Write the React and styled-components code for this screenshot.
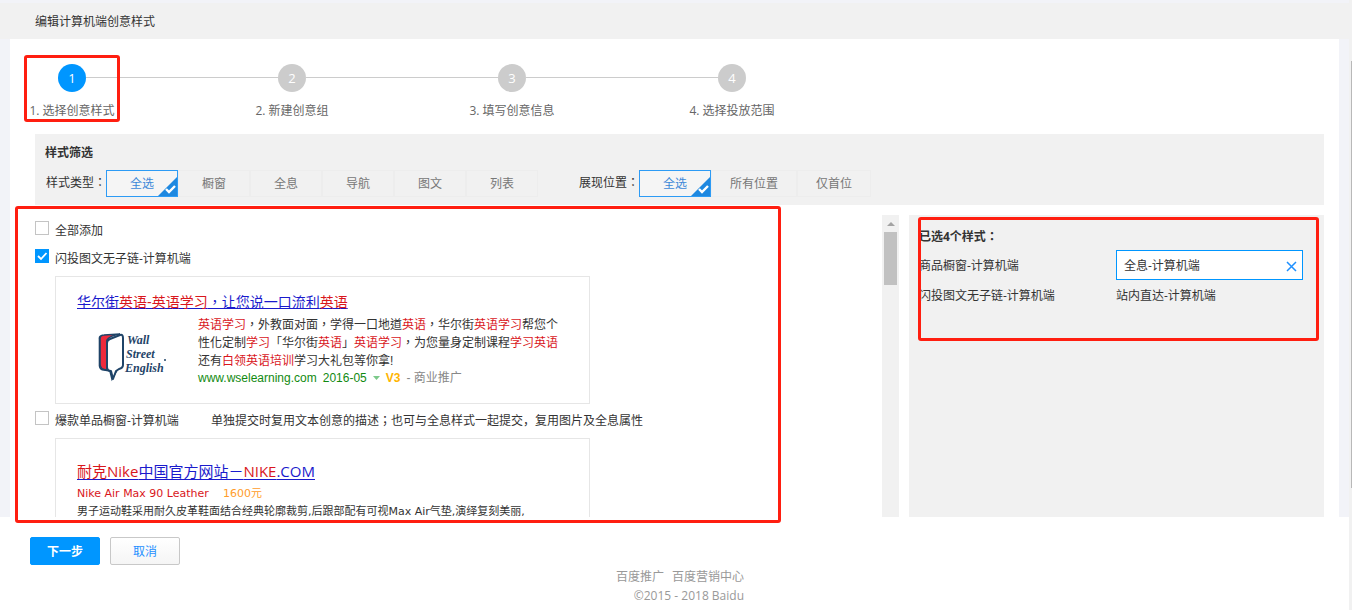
import React, { useState } from "react";
import styled, { createGlobalStyle, css } from "styled-components";

const GlobalStyle = createGlobalStyle`
  * { box-sizing: border-box; }
  body {
    margin: 0;
    background: #fff;
    color: #333;
    font: 12px/20px "Open Sans", "Noto Sans CJK SC", sans-serif;
  }
  h1, h2, p, ol, ul { margin: 0; padding: 0; font-size: inherit; font-weight: normal; }
  ol, ul { list-style: none; }
  button, input { font: inherit; margin: 0; }
`;

const Window = styled.div`
  display: flex;
  min-height: 100vh;
`;

const Page = styled.div`
  flex: 1;
  min-width: 0;
`;

const PageScroll = styled.div`
  width: 3px;
  padding: 61px 0 122px 2px;
  display: flex;
  background: #f1f1f1;
  &::before { content: ""; flex: 1; background: #b8b8b8; }
`;

const Header = styled.header`
  border-top: 3px solid #f2f3f8;
  padding: 9px 35px 7px;
  background: #f1f1f1;
`;

const Backdrop = styled.div`
  padding: 0 10px;
  background: #f2f3f8;
`;

const Panel = styled.main`
  padding-top: 25px;
  background: #fff;
`;

const Annotation = styled.div`
  position: absolute;
  inset: ${(p) => p.$inset};
  border: 3px solid #ff1e10;
  border-radius: 3px;
  pointer-events: none;
  z-index: 2;
`;

const Steps = styled.ol`
  display: flex;
  gap: 132px;
  padding: 0 18px 13px;
`;

const Step = styled.li`
  position: relative;
  width: 88px;
  display: flex;
  flex-direction: column;
  align-items: center;
  gap: 9px;
  color: #666;
  white-space: nowrap;
  &:not(:last-child)::after {
    content: "";
    position: absolute;
    top: 13px;
    left: 58px;
    width: 192px;
    height: 1px;
    background: #ccc;
  }
`;

const StepDot = styled.span`
  width: 28px;
  height: 28px;
  border-radius: 50%;
  background: ${(p) => (p.$current ? "#0096ff" : "#ccc")};
  color: #fff;
  font-size: 13px;
  line-height: 28px;
  text-align: center;
`;

const Body = styled.div`
  padding: 0 15px 0 25px;
`;

const Filter = styled.section`
  padding: 9px 10px 8px;
  background: #f1f1f1;
`;

const Strong = styled.h2`
  height: 20px;
  font-weight: bold;
  line-height: 20px;
`;

/* Punctuation set in the middle of its full-width cell. */
const Mark = styled.span`
  font-family: "Noto Sans CJK TC", sans-serif;
  line-height: 1;
`;

const FilterRow = styled.div`
  display: flex;
  gap: 40px;
  margin-top: 7px;
`;

const FilterGroup = styled.div`
  display: flex;
`;

const FilterLabel = styled.span`
  width: 61px;
  padding-left: 1px;
  line-height: 26px;
  white-space: nowrap;
`;

const Option = styled.button`
  position: relative;
  height: 27px;
  min-width: 72px;
  padding: 1px 18px 0;
  border: 1px solid ${(p) => (p.$on ? "#2d9bf5" : "#ededed")};
  background: ${(p) => (p.$on ? "#f5f5f5" : "#f1f1f1")};
  color: ${(p) => (p.$on ? "#3d88d8" : "#777")};
  line-height: 24px;
  white-space: nowrap;
  cursor: pointer;
  & > svg { position: absolute; right: 0; bottom: 0; }
`;

const Columns = styled.div`
  display: grid;
  grid-template-columns: minmax(0, 1fr) 415px;
  gap: 10px;
  margin-top: 10px;
`;

const ListArea = styled.section`
  position: relative;
  display: flex;
  height: 302px;
`;

const List = styled.div`
  flex: 1;
  padding-top: 4px;
  overflow: hidden;
`;

const Scrollbar = styled.div`
  width: 17px;
  padding: 7px 2px;
  display: flex;
  flex-direction: column;
  align-items: center;
  gap: 6px;
  background: #f1f1f1;
`;

const Thumb = styled.div`
  width: 13px;
  height: 53px;
  background: #c1c1c1;
`;

const CheckRow = styled.label`
  display: flex;
  align-items: center;
  gap: 6px;
  height: 23px;
  margin-bottom: ${(p) => p.$gap}px;
  white-space: nowrap;
`;

const Checkbox = styled.input`
  appearance: none;
  flex: none;
  width: 14px;
  height: 14px;
  margin-bottom: 5px;
  border: 1px solid #c4c4c4;
  background: #fff;
  &:checked {
    border-color: #0096ff;
    background: #0096ff url("data:image/svg+xml,%3Csvg xmlns='http://www.w3.org/2000/svg' viewBox='0 0 12 12'%3E%3Cpath d='M2 6l3 3 5.5-6' fill='none' stroke='white' stroke-width='1.8'/%3E%3C/svg%3E");
  }
`;

const Note = styled.span`
  margin-left: 26px;
`;

const adBox = css`
  width: 535px;
  margin: 0 0 5px 20px;
  border: 1px solid #e6e6e6;
`;

const SearchAd = styled.article`
  ${adBox}
  height: 128px;
  padding: 16px 21px;
  font-family: "Liberation Sans", "Noto Sans CJK TC", sans-serif;
`;

const SearchAdTitle = styled.a`
  display: block;
  color: #1a1acc;
  font-size: 14px;
  line-height: 18px;
  text-decoration: underline;
`;

const SearchAdBody = styled.div`
  display: grid;
  grid-template-columns: 121px 1fr;
  margin-top: 5px;
  line-height: 18px;
  white-space: nowrap;
  & > svg { margin: 16px 0 0 21px; }
`;

const Source = styled.div`
  display: flex;
  align-items: center;
  gap: 6px;
  color: #888;
  line-height: 16px;
  & > cite { color: #118a11; font-style: normal; }
`;

const Vip = styled.b`
  color: #ffb400;
`;

const Hot = styled.span`
  color: #d9161c;
`;

const ProductAd = styled.article`
  ${adBox}
  padding: 22px 21px;
  font-family: "DejaVu Sans", "Noto Sans CJK SC", sans-serif;
  font-size: 11px;
  line-height: 18px;
  white-space: nowrap;
`;

const ProductTitle = styled.a`
  display: block;
  margin-bottom: 4px;
  color: #1a1acc;
  font-family: "Open Sans", "Noto Sans CJK SC", sans-serif;
  font-size: 15px;
  line-height: 20px;
  text-decoration: underline;
  text-underline-offset: 2px;
  text-decoration-thickness: 1px;
`;

const Price = styled.span`
  margin-left: 14px;
  color: #ff9c2b;
`;

const Chosen = styled.aside`
  position: relative;
  padding: 12px 21px 11px 10px;
  background: #f1f1f1;
`;

const ChosenGrid = styled.ul`
  display: grid;
  grid-template-columns: 1fr 1fr;
  column-gap: 10px;
  margin-top: 3px;
`;

const ChosenItem = styled.li`
  display: flex;
  align-items: center;
  justify-content: space-between;
  height: 30px;
  padding-top: 2px;
  ${(p) =>
    p.$active &&
    css`
      padding: 2px 5px 0 7px;
      border: 1px solid #0096ff;
      background: #fff;
    `}
`;

const RemoveButton = styled.button`
  display: flex;
  padding: 0;
  border: 0;
  background: none;
  cursor: pointer;
`;

const Actions = styled.div`
  display: flex;
  gap: 10px;
  padding: 20px 30px 0;
`;

const Button = styled.button`
  width: 70px;
  height: 28px;
  padding: 2px 0 0;
  border: 1px solid ${(p) => (p.$primary ? "#0096ff" : "#c8c8c8")};
  border-radius: 2px;
  background: ${(p) => (p.$primary ? "#0096ff" : "linear-gradient(#fff, #f5f5f5)")};
  color: ${(p) => (p.$primary ? "#fff" : "#1e90ff")};
  font-weight: ${(p) => (p.$primary ? "bold" : "normal")};
  line-height: 24px;
  cursor: pointer;
`;

const Footer = styled.footer`
  display: flex;
  justify-content: center;
  padding: 2px 0 0 11px;
  color: #999;
  line-height: 19px;
  text-align: right;
`;

const FooterLinks = styled.nav`
  display: flex;
  gap: 8px;
  & > a { color: inherit; text-decoration: none; }
`;

const STEPS = ["选择创意样式", "新建创意组", "填写创意信息", "选择投放范围"];
const TYPES = ["全选", "橱窗", "全息", "导航", "图文", "列表"];
const PLACES = ["全选", "所有位置", "仅首位"];

function CornerTick() {
  return (
    <svg width="19" height="19" viewBox="0 0 19 19" aria-hidden="true">
      <path d="M19 0V19H0z" fill="#1e88e0" />
      <path d="M8 12l3 3 6-6" fill="none" stroke="#fff" strokeWidth="2.4" />
    </svg>
  );
}

function Options({ label, values }) {
  const [picked, setPicked] = useState(values[0]);
  return (
    <FilterGroup role="group" aria-label={label}>
      <FilterLabel>{label}<Mark>：</Mark></FilterLabel>
      {values.map((v) => (
        <Option key={v} type="button" $on={v === picked} aria-pressed={v === picked} onClick={() => setPicked(v)}>
          {v}
          {v === picked && <CornerTick />}
        </Option>
      ))}
    </FilterGroup>
  );
}

function SchoolLogo() {
  return (
    <svg width="70" height="50" viewBox="0 0 70 50" role="img" aria-label="Wall Street English">
      <path d="M3 4Q1 4 1.5 8V34Q2 38 6 38L12 39L14 47L19 38" fill="#fff" stroke="#1f4468" strokeWidth="1.6" />
      <path d="M2 7Q2 3 6 3L22 2Q11 4 9 8V38Q2 38 2 32z" fill="#ee2a3c" stroke="#1f4468" strokeWidth="1.6" />
      <path d="M12 7L22 3Q25 2 25 6V33Q25 36 21 37L18 39L15 47L13 39Q9 39 9 35V11Q9 8 12 7z" fill="#fff" stroke="#1f4468" strokeWidth="2" strokeLinejoin="round" />
      <g fill="#1f4468" fontFamily="Liberation Serif, serif" fontStyle="italic" fontWeight="bold" fontSize="12">
        <text x="29" y="12">Wall</text>
        <text x="28" y="26">Street</text>
        <text x="27" y="40">English</text>
      </g>
      <circle cx="67" cy="28" r="1" fill="#1f4468" />
    </svg>
  );
}

export default function App() {
  return (
    <Window>
      <GlobalStyle />
      <Page>
        <Header>
          <h1>编辑计算机端创意样式</h1>
        </Header>
        <Backdrop>
          <Panel>
            <Steps>
              {STEPS.map((name, i) => (
                <Step key={name} aria-current={i === 0 ? "step" : undefined}>
                  <StepDot $current={i === 0}>{i + 1}</StepDot>
                  <span>{i + 1}. {name}</span>
                  {i === 0 && <Annotation $inset="-9px -4px -1px -4px" />}
                </Step>
              ))}
            </Steps>
            <Body>
              <Filter>
                <Strong>样式筛选</Strong>
                <FilterRow>
                  <Options label="样式类型" values={TYPES} />
                  <Options label="展现位置" values={PLACES} />
                </FilterRow>
              </Filter>
              <Columns>
                <ListArea>
                  <List>
                    <CheckRow $gap={5}>
                      <Checkbox type="checkbox" />
                      <span>全部添加</span>
                    </CheckRow>
                    <CheckRow $gap={6}>
                      <Checkbox type="checkbox" defaultChecked />
                      <span>闪投图文无子链-计算机端</span>
                    </CheckRow>
                    <SearchAd>
                      <SearchAdTitle href="#wse">
                        华尔街<Hot>英语-英语学习</Hot>，让您说一口流利<Hot>英语</Hot>
                      </SearchAdTitle>
                      <SearchAdBody>
                        <SchoolLogo />
                        <div>
                          <p><Hot>英语学习</Hot>，外教面对面，学得一口地道<Hot>英语</Hot>，华尔街<Hot>英语学习</Hot>帮您个</p>
                          <p>性化定制<Hot>学习</Hot>「华尔街<Hot>英语</Hot>」<Hot>英语学习</Hot>，为您量身定制课程<Hot>学习英语</Hot></p>
                          <p>还有<Hot>白领英语培训</Hot>学习大礼包等你拿!</p>
                          <Source>
                            <cite>www.wselearning.com</cite>
                            <cite>2016-05</cite>
                            <svg width="7" height="4" viewBox="0 0 7 4" aria-hidden="true">
                              <path d="M0 0H7L3.500 4z" fill="#7cc98a" />
                            </svg>
                            <Vip>V3</Vip>
                            <span>- 商业推广</span>
                          </Source>
                        </div>
                      </SearchAdBody>
                    </SearchAd>
                    <CheckRow $gap={6}>
                      <Checkbox type="checkbox" />
                      <span>爆款单品橱窗-计算机端</span>
                      <Note>单独提交时复用文本创意的描述<Mark>；</Mark>也可与全息样式一起提交，复用图片及全息属性</Note>
                    </CheckRow>
                    <ProductAd>
                      <ProductTitle href="#nike">
                        <Hot>耐克Nike</Hot>中国官方网站－<Hot>NIKE</Hot>.COM
                      </ProductTitle>
                      <p><Hot>Nike Air Max 90 Leather</Hot><Price>1600元</Price></p>
                      <p>男子运动鞋采用耐久皮革鞋面结合经典轮廓裁剪,后跟部配有可视Max Air气垫,演绎复刻美丽,</p>
                    </ProductAd>
                  </List>
                  <Scrollbar aria-hidden="true">
                    <svg width="8" height="4" viewBox="0 0 8 4">
                      <path d="M4 0L8 4H0z" fill="#a3a3a3" />
                    </svg>
                    <Thumb />
                  </Scrollbar>
                  <Annotation $inset="-9px 118px -6px -20px" />
                </ListArea>
                <Chosen>
                  <Strong>已选4个样式<Mark>：</Mark></Strong>
                  <ChosenGrid>
                    <ChosenItem>商品橱窗-计算机端</ChosenItem>
                    <ChosenItem $active>
                      全息-计算机端
                      <RemoveButton type="button" aria-label="移除 全息-计算机端">
                        <svg width="11" height="11" viewBox="0 0 11 11">
                          <path d="M1 1L10 10M10 1L1 10" stroke="#1e90ff" strokeWidth="1.500" />
                        </svg>
                      </RemoveButton>
                    </ChosenItem>
                    <ChosenItem>闪投图文无子链-计算机端</ChosenItem>
                    <ChosenItem>站内直达-计算机端</ChosenItem>
                  </ChosenGrid>
                  <Annotation $inset="2px 5px 176px 9px" />
                </Chosen>
              </Columns>
            </Body>
          </Panel>
        </Backdrop>
        <Actions>
          <Button type="button" $primary>下一步</Button>
          <Button type="button">取消</Button>
        </Actions>
        <Footer>
          <div>
            <FooterLinks>
              <a href="#promotion">百度推广</a>
              <a href="#marketing">百度营销中心</a>
            </FooterLinks>
            <p>©2015 - 2018 Baidu</p>
          </div>
        </Footer>
      </Page>
      <PageScroll aria-hidden="true" />
    </Window>
  );
}
